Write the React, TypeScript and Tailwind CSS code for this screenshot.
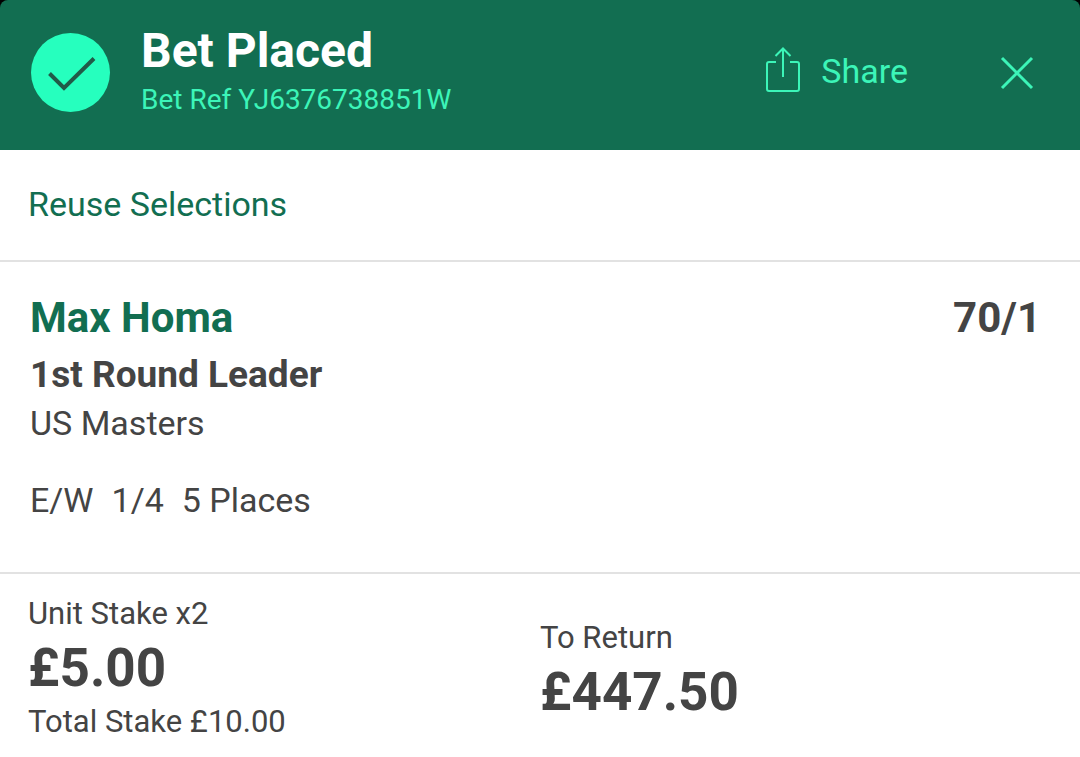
import React from 'react'

interface Receipt {
  reference: string;
  selection: string;
  odds: string;
  market: string;
  event: string;
  terms: string[];
  unitStake: string;
  totalStake: string;
  toReturn: string;
}

const receipt: Receipt = {
  reference: 'YJ6376738851W',
  selection: 'Max Homa',
  odds: '70/1',
  market: '1st Round Leader',
  event: 'US Masters',
  terms: ['E/W', '1/4', '5 Places'],
  unitStake: '£5.00',
  totalStake: '£10.00',
  toReturn: '£447.50',
}

const ShareIcon = () => (
  <svg className="h-12 w-9" viewBox="0 0 36 48" fill="none" stroke="currentColor" strokeWidth="2" aria-hidden="true">
    <path d="M12 15H5a2 2 0 0 0-2 2v25a2 2 0 0 0 2 2h28a2 2 0 0 0 2-2V17a2 2 0 0 0-2-2h-7" />
    <path d="M19 30V2M11.500 9L19 1.500 26.500 9" />
  </svg>
)

const ReceiptHeader: React.FC<{ reference: string }> = ({ reference }) => (
  <header className="flex h-[150px] items-start rounded-t-lg bg-[#126e51] pl-[31px] pr-[46px] text-[#3cf5b8]">
    <svg className="mt-[33px] h-20 w-20 shrink-0" viewBox="0 0 80 80" aria-hidden="true">
      <circle cx="39.5" cy="39.5" r="39.5" fill="#26ffbe" />
      <path d="M18.5 40.5L33 55l30-29.5" fill="none" stroke="#215a48" strokeWidth="4" />
    </svg>
    <div className="ml-[30px] mt-[25px] flex-1">
      <h1 className="text-[48px] font-bold leading-[52px] text-white">Bet Placed</h1>
      <p className="text-[28px] leading-[46px]">Bet Ref {reference}</p>
    </div>
    <button type="button" className="mt-[47px] flex items-center gap-[21px] text-[34px] leading-[48px]">
      <ShareIcon />
      Share
    </button>
    <button type="button" aria-label="Close" className="ml-[92px] mt-[56px]">
      <svg className="h-[34px] w-[34px]" viewBox="0 0 34 34" fill="none" stroke="currentColor" strokeWidth="3" aria-hidden="true">
        <path d="M2 2l30 30M32 2L2 32" />
      </svg>
    </button>
  </header>
)

export default function App() {
  return (
    <div className="bg-black font-['Roboto',sans-serif] text-[#444444]">
      <ReceiptHeader reference={receipt.reference} />
      <main className="bg-white">
        <div className="border-b-2 border-[#e2e2e2] px-[28px] pb-9 pt-[34px]">
          <button type="button" className="block text-[34px] leading-[40px] text-[#126e51]">Reuse Selections</button>
        </div>
        <section className="border-b-2 border-[#e2e2e2] pb-[52px] pl-[30px] pr-[39px] pt-[30px]">
          <div className="flex justify-between text-[42px] font-bold leading-[52px]">
            <h2 className="text-[#126e51]">{receipt.selection}</h2>
            <span>{receipt.odds}</span>
          </div>
          <h3 className="text-[37px] font-bold leading-[62px]">{receipt.market}</h3>
          <p className="text-[34px] leading-[34px]">{receipt.event}</p>
          <p className="mt-10 flex gap-[18px] text-[34px] leading-[40px]">
            {receipt.terms.map(term => <span key={term}>{term}</span>)}
          </p>
        </section>
        <section className="grid grid-cols-2 items-center px-[28px] py-5">
          <div>
            <p className="text-[31px] leading-[40px]">Unit Stake x2</p>
            <p className="text-[53px] font-bold leading-[68px]">{receipt.unitStake}</p>
            <p className="text-[31px] leading-[40px]">Total Stake {receipt.totalStake}</p>
          </div>
          <div className="pt-2">
            <p className="text-[31px] leading-[40px]">To Return</p>
            <p className="text-[53px] font-bold leading-[68px]">{receipt.toReturn}</p>
          </div>
        </section>
      </main>
    </div>
  )
}
